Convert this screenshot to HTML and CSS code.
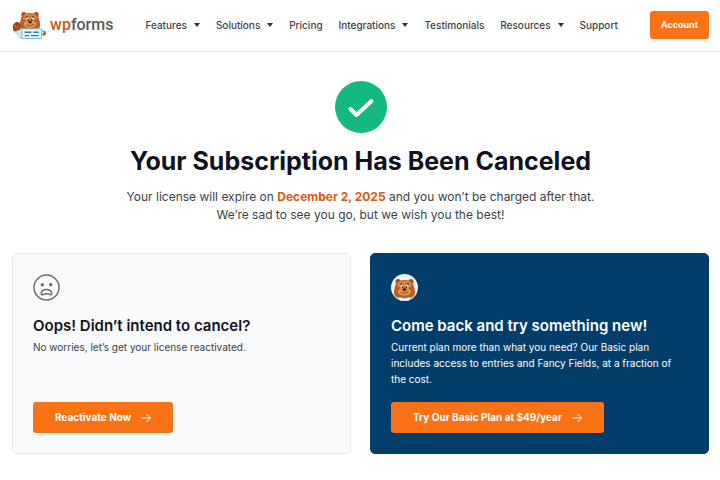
FILE: index.html
```html
<!DOCTYPE html>
<html lang="en">
<head>
    <meta charset="UTF-8">
    <meta name="viewport" content="width=device-width, initial-scale=1.0">
    <title>Subscription Canceled - WPForms</title>
    <link rel="stylesheet" href="styles.css">
</head>
<body>
    <header class="header">
        <a class="logo" href="#" aria-label="WPForms">
            <svg class="logo-bear" viewBox="0 0 70 58" aria-hidden="true">
                <use href="#bear-head" x="15" y="1"/>
                <path d="M3 42c-4-5-3-16 3-18 5-3 11 1 11 8 0 5-2 8-3 12z" fill="#8f4620"/>
                <path d="M6 30l1 6M11 29v8" stroke="#c9743a" stroke-width="2" stroke-linecap="round"/>
                <path d="M5 43l9-4 10 3v14H15z" fill="#cce8f5" stroke="#7fb2cc"/>
                <circle cx="64" cy="46" r="5" fill="#9c4c22"/>
                <path d="M54 36l9 4 2 6-5 4z" fill="#cce8f5" stroke="#7fb2cc"/>
                <rect x="19" y="37" width="41" height="20" rx="1" fill="#e8f7fd" stroke="#7bb9db" stroke-width="2"/>
                <path d="M25 44h14M43 44h11M25 51h9M38 51h16" stroke="#267fb7" stroke-width="3"/>
            </svg>
            <span class="logo-text"><span class="logo-wp">wp</span>forms</span>
        </a>
        <nav class="nav">
            <button class="nav-item nav-drop" type="button">Features</button>
            <button class="nav-item nav-drop" type="button">Solutions</button>
            <a class="nav-item" href="#">Pricing</a>
            <button class="nav-item nav-drop" type="button">Integrations</button>
            <a class="nav-item" href="#">Testimonials</a>
            <button class="nav-item nav-drop" type="button">Resources</button>
            <a class="nav-item" href="#">Support</a>
        </nav>
        <button class="btn btn-account" type="button">Account</button>
    </header>

    <main class="main">
        <section class="intro">
            <svg class="check" viewBox="0 0 52 52" aria-hidden="true">
                <circle cx="26" cy="26" r="26" fill="#14b881"/>
                <path d="M15.500 28l6 6 15-14" fill="none" stroke="#fff" stroke-width="4" stroke-linecap="round" stroke-linejoin="round"/>
            </svg>
            <h1 class="title">Your Subscription Has Been Canceled</h1>
            <p class="lead">Your license will expire on <strong class="date">December 2, 2025</strong> and you won’t be charged after that.<br>We’re sad to see you go, but we wish you the best!</p>
        </section>

        <div class="cards">
            <section class="card">
                <svg class="card-icon" viewBox="0 0 27 27" fill="none" stroke="#6b6d74" aria-hidden="true">
                    <circle cx="13.500" cy="13.500" r="12.500" stroke-width="1.500"/>
                    <circle cx="9.300" cy="10.800" r="1.700" fill="#6b6d74" stroke="none"/>
                    <circle cx="17.700" cy="10.800" r="1.700" fill="#6b6d74" stroke="none"/>
                    <path d="M8.300 20c-.9-6 11.300-6 10.400 0-.1.800-.8.900-1.500.6-2.500-1.200-4.900-1.200-7.400 0-.7.300-1.400.2-1.500-.6z" stroke-width="1.500" stroke-linejoin="round"/>
                </svg>
                <h2 class="card-title">Oops! Didn’t intend to cancel?</h2>
                <p class="card-text">No worries, let’s get your license reactivated.</p>
                <button class="btn btn-card" type="button">
                    Reactivate Now
                    <svg class="arrow" viewBox="0 0 10 10" aria-hidden="true"><path d="M.5 5h9M5.500 1l4 4-4 4"/></svg>
                </button>
            </section>

            <section class="card card-dark">
                <svg class="card-icon" viewBox="0 0 54 54" aria-hidden="true">
                    <defs>
                        <clipPath id="face"><circle cx="27" cy="27" r="27"/></clipPath>
                        <g id="bear-head">
                            <circle cx="8" cy="6" r="5" fill="#9c4c22"/>
                            <circle cx="34" cy="6" r="5" fill="#9c4c22"/>
                            <path d="M4 9C8 1 34 1 38 9c1 6 4 12 4 19 0 9-9 12-21 12S0 37 0 28C0 21 3 15 4 9z" fill="#c05c24"/>
                            <path d="M8 8c5-6 21-6 26 0l2 9H6z" fill="#d9803e"/>
                            <ellipse cx="21" cy="26" rx="13" ry="8" fill="#e39650"/>
                            <ellipse cx="16" cy="16" rx="3" ry="3" fill="#fff"/>
                            <ellipse cx="26" cy="16" rx="3" ry="3" fill="#fff"/>
                            <circle cx="17" cy="17" r="2" fill="#2b211d"/>
                            <circle cx="25" cy="17" r="2" fill="#2b211d"/>
                            <path d="M12 12l5-2M25 10l5 2" stroke="#6b351b" stroke-width="2"/>
                            <ellipse cx="21" cy="22" rx="4" ry="3" fill="#4a2a1d"/>
                            <path d="M14 28q7 5 14-1" fill="none" stroke="#8a4a26" stroke-width="2" stroke-linecap="round"/>
                        </g>
                    </defs>
                    <circle cx="27" cy="27" r="27" fill="#f0f1f2"/>
                    <g clip-path="url(#face)">
                        <path d="M10 41h34l4 14H6z" fill="#b9dcec"/>
                        <use href="#bear-head" x="6" y="9"/>
                        <path d="M16 46l11 3 11-3v8H16z" fill="#e4f5fc" stroke="#77acc9"/>
                    </g>
                </svg>
                <h2 class="card-title">Come back and try something new!</h2>
                <p class="card-text">Current plan more than what you need? Our Basic plan includes access to entries and Fancy Fields, at a fraction of the cost.</p>
                <button class="btn btn-card" type="button">
                    Try Our Basic Plan at $49/year
                    <svg class="arrow" viewBox="0 0 10 10" aria-hidden="true"><path d="M.5 5h9M5.500 1l4 4-4 4"/></svg>
                </button>
            </section>
        </div>
    </main>
</body>
</html>
```
FILE: styles.css
```css
* {
    box-sizing: border-box;
}
body {
    margin: 0;
    background: #fff;
    color: #3b3f47;
    font-family: 'Inter', 'Liberation Sans', sans-serif;
}
h1, h2, p {
    margin: 0;
}
button {
    font-family: inherit;
    border: none;
    cursor: pointer;
}
svg {
    display: block;
    flex: none;
}

/* header */
.header {
    display: flex;
    align-items: center;
    padding: 11px 11px 12px 12px;
    border-bottom: 1px solid #e9eaec;
}
.logo {
    display: flex;
    align-items: center;
    gap: 3px;
    text-decoration: none;
}
.logo-bear {
    width: 35px;
    height: 28px;
}
.logo-text {
    font-family: 'Roboto', 'Open Sans', sans-serif;
    font-weight: 500;
    font-size: 16px;
    line-height: 28px;
    color: #58595b;
}
.logo-wp {
    color: #c45a1c;
}
.nav {
    display: flex;
    flex: 1;
    justify-content: space-between;
    margin: 0 32px;
}
.nav-item {
    display: flex;
    align-items: center;
    gap: 7px;
    padding: 0;
    background: none;
    font-size: 10px;
    font-weight: 500;
    line-height: 16px;
    color: #3b3f47;
    text-decoration: none;
}
.nav-drop::after {
    content: "";
    border: 3px solid transparent;
    border-top: 4px solid #2c3038;
    border-bottom: none;
}
.btn {
    background: #f97316;
    color: #fff;
    font-weight: 700;
    border-radius: 3px;
}
.btn-account {
    padding: 6px 11px;
    font-size: 9px;
    line-height: 16px;
}

/* intro */
.main {
    padding: 29px 11px 26px 12px;
}
.intro {
    text-align: center;
}
.check {
    width: 52px;
    height: 52px;
    margin: 0 auto 10px;
}
.title {
    font-size: 25px;
    font-weight: 700;
    line-height: 36px;
    color: #101223;
}
.lead {
    margin-top: 9px;
    font-size: 12px;
    line-height: 18px;
}
.date {
    color: #e4570c;
}

/* cards */
.cards {
    display: grid;
    grid-template-columns: 1fr 1fr;
    gap: 19px;
    margin-top: 29px;
}
.card {
    display: flex;
    flex-direction: column;
    align-items: flex-start;
    padding: 20px;
    border: 1px solid #e5e9ee;
    border-radius: 5px;
    background: #f9fafc;
}
.card-icon {
    width: 27px;
    height: 27px;
    margin-bottom: 14px;
}
.card-title {
    font-size: 15px;
    font-weight: 600;
    line-height: 22px;
    color: #101223;
}
.card-text {
    margin: 2px 0 15px;
    font-size: 10px;
    line-height: 16px;
}
.btn-card {
    display: flex;
    align-items: center;
    gap: 10px;
    margin-top: auto;
    padding: 0 22px;
    font-size: 10px;
    line-height: 31px;
}
.arrow {
    width: 10px;
    height: 10px;
    fill: none;
    stroke: #fff;
}
.card-dark {
    background: #023e69;
    border-color: #023e69;
    color: #fff;
}
.card-dark .card-title {
    color: #fff;
}
```
